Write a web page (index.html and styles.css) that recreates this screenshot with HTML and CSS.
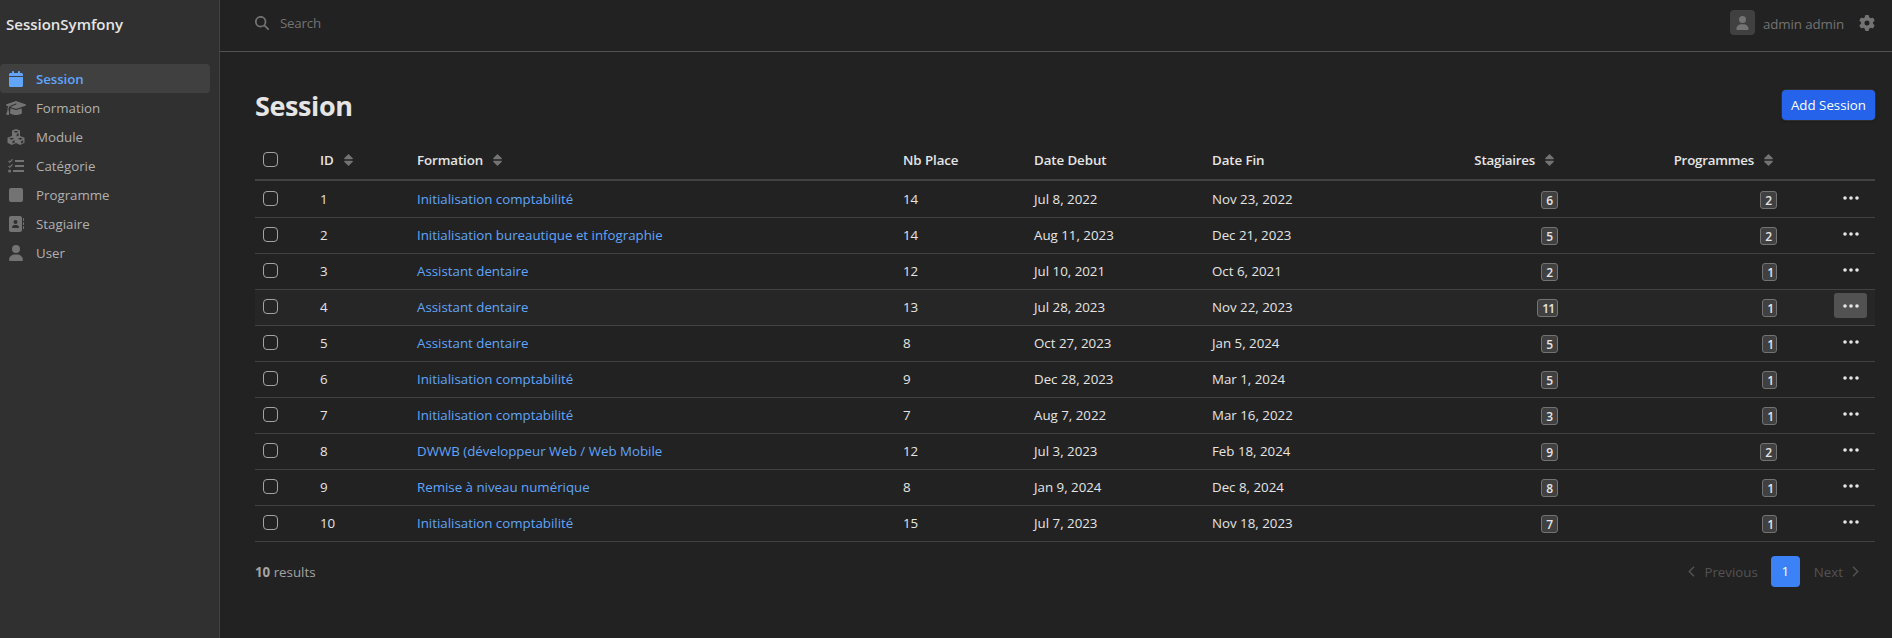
FILE: index.html
```html
<!DOCTYPE html>
<html lang="fr">
<head>
<meta charset="utf-8">
<title>Session</title>
<link rel="stylesheet" href="styles.css">
</head>
<body>
<svg class="sprite" aria-hidden="true">
  <symbol id="i-sort" viewBox="0 0 9 12"><path d="M4.500 0 8.800 4.200Q9 5.200 8.200 5.200H.8Q0 5.200 .2 4.200Z"/><path d="M4.500 12 8.800 7.800Q9 6.800 8.200 6.800H.8Q0 6.800 .2 7.800Z"/></symbol>
  <symbol id="i-dots" viewBox="0 0 16 4"><circle cx="2" cy="2" r="1.8"/><circle cx="8" cy="2" r="1.8"/><circle cx="14" cy="2" r="1.8"/></symbol>
  <symbol id="i-user" viewBox="0 0 448 512"><path d="M224 256A128 128 0 1 0 224 0a128 128 0 1 0 0 256zm-45.700 48C79.800 304 0 383.800 0 482.300C0 498.700 13.300 512 29.700 512H418.300c16.400 0 29.700-13.300 29.700-29.700C448 383.800 368.200 304 269.700 304H178.300z"/></symbol>
</svg>
<div class="app">
  <aside class="sidebar">
    <div class="brand">SessionSymfony</div>
    <nav class="menu">
      <a class="item active"><span class="ico"><svg width="14" height="16" viewBox="0 0 448 512"><path d="M96 32V64H48C21.500 64 0 85.500 0 112v48H448V112c0-26.500-21.500-48-48-48H352V32c0-17.700-14.300-32-32-32s-32 14.300-32 32V64H160V32c0-17.700-14.300-32-32-32S96 14.300 96 32zM448 192H0V464c0 26.500 21.500 48 48 48H400c26.500 0 48-21.500 48-48V192z"/></svg></span><span>Session</span></a>
      <a class="item"><span class="ico"><svg width="20" height="16" viewBox="0 0 640 512"><path d="M320 32c-8.100 0-16.100 1.400-23.700 4.100L15.800 137.400C6.300 140.900 0 149.900 0 160s6.300 19.100 15.800 22.600l57.900 20.900C57.300 229.300 48 259.800 48 291.900v28.100c0 28.400-10.800 57.700-22.300 80.800c-6.500 13-13.900 25.800-22.500 37.600C0 442.700-.9 448.300 .9 453.400s6 8.900 11.200 10.200l64 16c4.200 1.100 8.700 .3 12.400-2s6.300-6.100 7.100-10.400c8.600-42.800 4.300-81.200-2.100-108.700C90.300 344.300 86 329.800 80 316.500V291.900c0-30.200 10.200-58.700 27.900-81.500c12.900-15.500 29.600-28 49.200-35.700l157-61.700c8.200-3.200 17.500 .8 20.700 9s-.8 17.500-9 20.700l-157 61.700c-12.400 4.900-23.300 12.400-32.200 21.600l159.600 57.600c7.600 2.700 15.600 4.100 23.700 4.100s16.100-1.400 23.700-4.100L624.200 182.600c9.500-3.400 15.800-12.500 15.800-22.600s-6.300-19.100-15.800-22.600L343.700 36.100C336.100 33.400 328.100 32 320 32zM128 408c0 35.300 86 72 192 72s192-36.700 192-72L496.700 262.600 354.500 314c-11.100 4-22.800 6-34.500 6s-23.500-2-34.500-6L143.300 262.600 128 408z"/></svg></span><span>Formation</span></a>
      <a class="item"><span class="ico"><svg width="18" height="16" viewBox="0 0 18 16"><path fill-rule="evenodd" d="M9 0 13 1.600V7L17.500 8.800V13.800L13.200 16 9 14 4.800 16 .5 13.800V8.800L5 7V1.600ZM6.400 2.700 9 3.700 11.600 2.700 9 1.700ZM9.700 5V7.400L11.700 6.500V4.200ZM2 9.800 4.700 10.800 7.300 9.800 4.700 8.800ZM5.500 12.200V14.500L7.600 13.500V11.300ZM10.700 9.800 13.300 10.800 16 9.800 13.300 8.800ZM14 12.200V14.500L16.200 13.500V11.300Z"/></svg></span><span>Module</span></a>
      <a class="item"><span class="ico"><svg width="16" height="14" viewBox="0 0 16 14"><path d="M7 1.100H16V2.900H7ZM7 6.100H16V7.900H7ZM5 11.100H16V12.900H5Z"/><circle cx="1.600" cy="12" r="1.500"/><path class="tick" d="M.6 2 1.800 3.200 4.600.4M.6 7 1.800 8.200 4.600 5.400"/></svg></span><span>Catégorie</span></a>
      <a class="item"><span class="ico"><svg width="14" height="14" viewBox="0 0 14 14"><rect width="14" height="14" rx="2"/></svg></span><span>Programme</span></a>
      <a class="item"><span class="ico"><svg width="16" height="16" viewBox="0 0 512 512"><path d="M96 0C60.700 0 32 28.700 32 64V448c0 35.300 28.700 64 64 64H384c35.300 0 64-28.700 64-64V64c0-35.300-28.700-64-64-64H96zM208 288h64c44.200 0 80 35.800 80 80c0 8.800-7.200 16-16 16H144c-8.800 0-16-7.200-16-16c0-44.200 35.800-80 80-80zm-32-96a64 64 0 1 1 128 0 64 64 0 1 1 -128 0z"/><rect x="480" y="64" width="32" height="96" rx="16"/><rect x="480" y="192" width="32" height="96" rx="16"/><rect x="480" y="320" width="32" height="96" rx="16"/></svg></span><span>Stagiaire</span></a>
      <a class="item"><span class="ico"><svg width="14" height="16"><use href="#i-user"/></svg></span><span>User</span></a>
    </nav>
  </aside>
  <div class="page">
    <header class="topbar">
      <svg width="14" height="14" viewBox="0 0 512 512"><path d="M416 208c0 45.900-14.900 88.300-40 122.700L502.600 457.400c12.500 12.500 12.500 32.800 0 45.300s-32.800 12.500-45.300 0L330.700 376c-34.400 25.200-76.800 40-122.700 40C93.100 416 0 322.900 0 208S93.100 0 208 0S416 93.100 416 208zM208 352a144 144 0 1 0 0-288 144 144 0 1 0 0 288z"/></svg>
      <span class="search">Search</span>
      <span class="avatar"><svg width="13" height="14"><use href="#i-user"/></svg></span>
      <span class="username">admin admin</span>
      <svg class="gear" width="16" height="16" viewBox="0 0 512 512"><path d="M495.900 166.600c3.200 8.700 .5 18.400-6.400 24.600l-43.300 39.400c1.100 8.300 1.700 16.800 1.700 25.400s-.6 17.100-1.700 25.400l43.300 39.400c6.900 6.200 9.600 15.900 6.400 24.600c-4.400 11.900-9.700 23.300-15.800 34.300l-4.700 8.100c-6.600 11-14 21.400-22.100 31.200c-5.900 7.200-15.700 9.600-24.500 6.800l-55.700-17.700c-13.400 10.300-28.200 18.900-44 25.400l-12.500 57.100c-2 9.100-9 16.300-18.200 17.800c-13.800 2.300-28 3.500-42.500 3.500s-28.700-1.200-42.500-3.500c-9.200-1.500-16.200-8.700-18.200-17.800l-12.500-57.100c-15.800-6.500-30.600-15.100-44-25.400L83.100 425.900c-8.800 2.800-18.600 .3-24.500-6.800c-8.100-9.800-15.500-20.200-22.100-31.200l-4.700-8.100c-6.100-11-11.400-22.400-15.800-34.300c-3.200-8.700-.5-18.400 6.400-24.600l43.300-39.400C64.600 273.100 64 264.600 64 256s.6-17.100 1.700-25.400L22.400 191.200c-6.900-6.200-9.600-15.900-6.400-24.600c4.400-11.900 9.700-23.300 15.800-34.300l4.700-8.100c6.600-11 14-21.400 22.100-31.200c5.900-7.200 15.700-9.600 24.500-6.800l55.700 17.700c13.400-10.300 28.200-18.900 44-25.400l12.500-57.100c2-9.100 9-16.300 18.200-17.800C227.300 1.200 241.500 0 256 0s28.700 1.200 42.500 3.500c9.200 1.500 16.200 8.700 18.200 17.800l12.500 57.100c15.800 6.500 30.600 15.100 44 25.400l55.700-17.700c8.800-2.800 18.600-.3 24.500 6.800c8.100 9.800 15.500 20.200 22.100 31.200l4.700 8.100c6.100 11 11.400 22.400 15.800 34.300zM256 336a80 80 0 1 0 0-160 80 80 0 1 0 0 160z"/></svg>
    </header>
    <main class="content">
      <div class="head"><h1>Session</h1><button class="add">Add Session</button></div>
      <table class="grid">
        <colgroup><col class="c-check"><col class="c-id"><col class="c-form"><col class="c-nb"><col class="c-start"><col class="c-end"><col class="c-stag"><col class="c-prog"><col class="c-act"></colgroup>
        <thead><tr>
          <th><input type="checkbox"></th>
          <th>ID<svg class="sort"><use href="#i-sort"/></svg></th>
          <th>Formation<svg class="sort"><use href="#i-sort"/></svg></th>
          <th>Nb Place</th><th>Date Debut</th><th>Date Fin</th>
          <th class="num">Stagiaires<svg class="sort"><use href="#i-sort"/></svg></th>
          <th class="num">Programmes<svg class="sort"><use href="#i-sort"/></svg></th>
          <th></th>
        </tr></thead>
        <tbody id="rows"></tbody>
      </table>
      <footer class="foot">
        <div class="count"><b>10</b> results</div>
        <div class="pager">
          <svg width="7" height="11" viewBox="0 0 7 11"><path d="M6 .8 1.300 5.500 6 10.200"/></svg>
          <span class="prev">Previous</span><span class="current">1</span><span class="next">Next</span>
          <svg width="7" height="11" viewBox="0 0 7 11"><path d="M1 .8 5.700 5.500 1 10.200"/></svg>
        </div>
      </footer>
    </main>
  </div>
</div>
<script src="rows.js"></script>
</body>
</html>
```
FILE: styles.css
```css
* { box-sizing: border-box; }
body { margin: 0; background: #222; color: #e5e5e5; font: 13.3px/20px "Open Sans", "Noto Sans", sans-serif; }
svg { fill: #737373; display: block; flex: none; }
.sprite { position: absolute; width: 0; height: 0; }
.app { display: flex; height: 638px; overflow: hidden; }
.sidebar { width: 220px; flex: none; background: #303030; border-right: 1px solid #424242; }
.brand { padding: 14px 0 0 6px; height: 64px; font-size: 15px; font-weight: 600; line-height: 21px; }
.menu { width: 210px; }
.item { display: flex; align-items: center; height: 29px; gap: 10px; padding-left: 6px; color: #b0b0b0; }
.ico { width: 20px; display: flex; justify-content: center; }
.tick { fill: none; stroke: #737373; stroke-width: 1.2; }
.active { background: #404040; border-radius: 4px; color: #60a5fa; font-weight: 600; letter-spacing: -0.1px; }
.active svg { fill: #60a5fa; }
.page { flex: 1; min-width: 0; }
.topbar { height: 52px; border-bottom: 1px solid #525252; display: flex; align-items: center; padding: 0 17px 5px 35px; color: #737373; }
.search { margin-left: 11px; flex: 1; letter-spacing: -0.2px; }
.avatar { width: 25px; height: 25px; border-radius: 4px; background: #404040; display: grid; place-items: center; margin: -1px 8px 0 0; }
.username { letter-spacing: -0.1px; padding-top: 1px; }
.gear { margin-left: 15px; }
.content { padding: 37px 17px 0 35px; }
.head { display: flex; justify-content: space-between; height: 55px; }
h1 { margin: -1px 0 0; font-size: 27px; line-height: 36px; font-weight: 700; letter-spacing: -0.4px; }
.add { width: 93px; height: 30px; margin-top: 1px; padding: 0; border: 0; border-radius: 4px; background: #2563eb; color: #fff; font: inherit; box-shadow: 0 0 0 1px #303030, 0 1px 3px #0006; }
.grid { width: 1620px; table-layout: fixed; border-spacing: 0; border-collapse: separate; }
.c-check { width: 57px; } .c-id { width: 97px; } .c-form { width: 486px; } .c-nb { width: 131px; } .c-start { width: 178px; } .c-end { width: 184px; } .c-stag { width: 178px; } .c-prog { width: 219px; } .c-act { width: 90px; }
th, td { padding: 0 8px; text-align: left; white-space: nowrap; }
th { height: 37px; padding-bottom: 4px; border-bottom: 2px solid #424242; font-weight: 600; letter-spacing: -0.08px; }
td { height: 36px; padding-bottom: 2px; border-bottom: 1px solid #424242; }
tbody tr:first-child td { height: 37px; padding-top: 1px; }
.num { text-align: right; }
th.num { padding-right: 12px; letter-spacing: -0.2px; }
.sort { display: inline-block; width: 9px; height: 12px; margin-left: 10px; vertical-align: -1px; }
input { appearance: none; display: block; width: 15px; height: 15px; margin: 0; border: 1px solid #a3a3a3; border-radius: 4px; }
.link { color: #60a5fa; }
.badge { display: inline-block; height: 18px; padding: 0 4px; border: 1px solid #737373; border-radius: 3px; background: #404040; font-size: 12px; font-weight: 600; line-height: 17px; vertical-align: middle; }
.slim { padding: 0 3px 0 4px; letter-spacing: -1px; }
.more { width: 33px; height: 25px; margin: -2px 0 0 auto; border-radius: 3px; display: grid; place-items: center; }
.more svg { width: 16px; height: 4px; fill: #e5e5e5; }
.hover { background: #262626; }
.hover .more { background: #525252; }
.foot { display: flex; justify-content: space-between; align-items: center; height: 31px; margin-top: 14px; color: #a3a3a3; }
.pager { display: flex; align-items: center; color: #525252; padding-right: 16px; }
.pager svg { fill: none; stroke: #525252; stroke-width: 1.5; }
.prev { margin: 0 13px 0 9px; }
.current { width: 29px; height: 31px; border-radius: 4px; background: #3b82f6; color: #fff; line-height: 31px; text-align: center; }
.next { margin: 0 9px 0 14px; }
```
FILE: rows.js
```js
const sessions = [
  [1, "Initialisation comptabilité", 14, "Jul 8, 2022", "Nov 23, 2022", 6, 2],
  [2, "Initialisation bureautique et infographie", 14, "Aug 11, 2023", "Dec 21, 2023", 5, 2],
  [3, "Assistant dentaire", 12, "Jul 10, 2021", "Oct 6, 2021", 2, 1],
  [4, "Assistant dentaire", 13, "Jul 28, 2023", "Nov 22, 2023", 11, 1],
  [5, "Assistant dentaire", 8, "Oct 27, 2023", "Jan 5, 2024", 5, 1],
  [6, "Initialisation comptabilité", 9, "Dec 28, 2023", "Mar 1, 2024", 5, 1],
  [7, "Initialisation comptabilité", 7, "Aug 7, 2022", "Mar 16, 2022", 3, 1],
  [8, "DWWB (développeur Web / Web Mobile", 12, "Jul 3, 2023", "Feb 18, 2024", 9, 2],
  [9, "Remise à niveau numérique", 8, "Jan 9, 2024", "Dec 8, 2024", 8, 1],
  [10, "Initialisation comptabilité", 15, "Jul 7, 2023", "Nov 18, 2023", 7, 1]
];
// Badges made only of ones are drawn narrower
const badge = n => `<span class="badge${/^1+$/.test(n) ? " slim" : ""}">${n}</span>`;
document.getElementById("rows").innerHTML = sessions.map(([id, name, places, start, end, trainees, programs]) => `
<tr class="${id === 4 ? "hover" : ""}"><td><input type="checkbox"></td><td>${id}</td><td><a class="link">${name}</a></td>
<td>${places}</td><td>${start}</td><td>${end}</td>
<td class="num">${badge(trainees)}</td><td class="num">${badge(programs)}</td>
<td><div class="more"><svg><use href="#i-dots"/></svg></div></td></tr>`).join("");
```
